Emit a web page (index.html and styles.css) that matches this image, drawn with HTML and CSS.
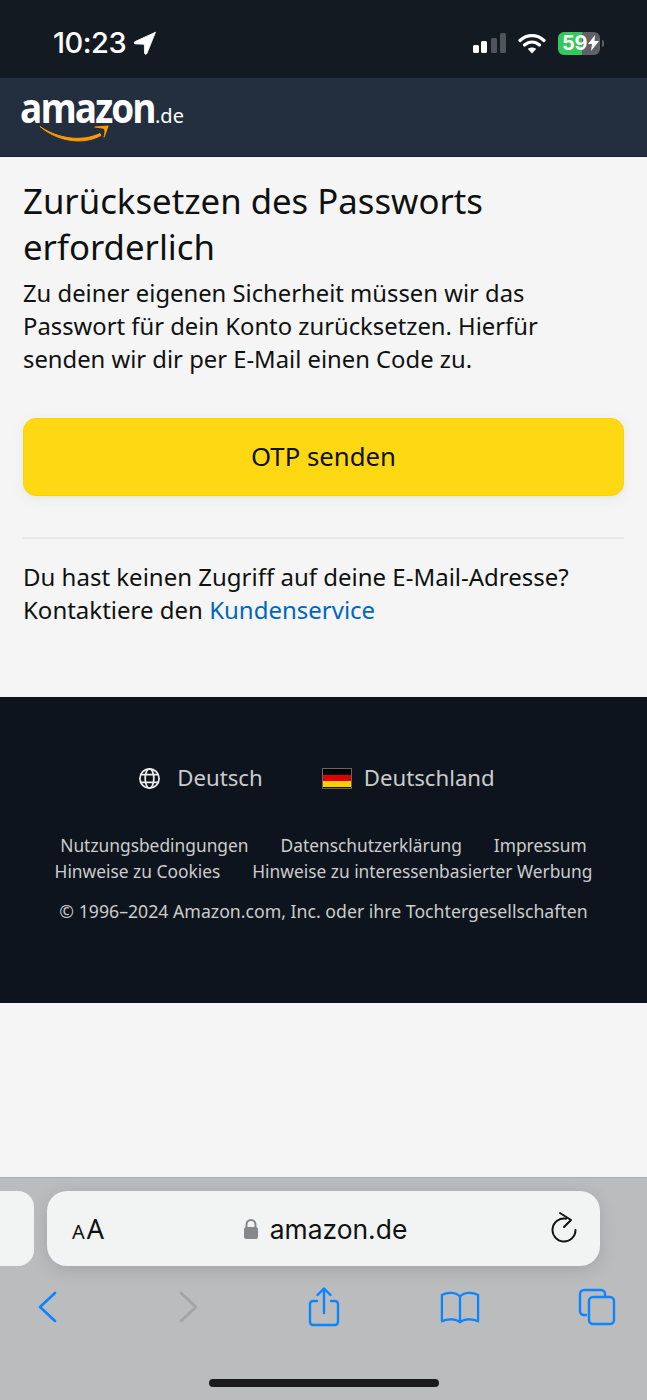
FILE: index.html
```html
<!DOCTYPE html>
<html lang="de">
<head>
<meta charset="utf-8">
<title>Amazon</title>
<link rel="stylesheet" href="styles.css">
</head>
<body>
<div class="page">
  <div class="status">
    <div class="status-left">
      <span class="time">10:23</span>
      <svg class="loc" width="24" height="24" viewBox="0 0 24 24"><path d="M22.500 1.200 2 10.600c-1.300.6-1 2.300.5 2.300l8.800.3.300 8.800c0 1.500 1.700 1.800 2.300.5z" fill="#fff" stroke="#fff" stroke-width=".8"/></svg>
    </div>
    <div class="status-right">
      <svg width="33" height="20" viewBox="0 0 33 20"><rect x="0" y="12" width="6" height="8" rx="1.500" fill="#fff"/><rect x="8" y="8" width="6" height="12" rx="1.500" fill="#fff"/><rect x="18" y="5" width="6" height="15" rx="1.500" fill="#50555c"/><rect x="27" y="0" width="6" height="20" rx="1.500" fill="#50555c"/></svg>
      <svg width="28" height="21" viewBox="0 0 28 21"><path d="M2 7.500C9 1 19 1 26 7.500M6.500 12C11 8 17 8 21.500 12" fill="none" stroke="#fff" stroke-width="3.200" stroke-linecap="round"/><path d="M14 20.500 9.800 16c2.400-2 6-2 8.400 0z" fill="#fff"/></svg>
      <div class="battery">
        <div class="batt-body"><span class="batt-num">59</span><svg class="bolt" width="11" height="16" viewBox="0 0 11 16"><path d="M7 0 0 9h4l-1 7 8-10H6.500z" fill="#fff"/></svg></div>
        <span class="batt-cap"></span>
      </div>
    </div>
  </div>
  <header class="nav">
    <div class="logo">
      <span class="logo-word">amazon</span><span class="logo-tld">.de</span>
      <svg class="smile" width="72" height="18" viewBox="0 0 72 18"><path d="M0 1.500C18 14 42 17 60 8.500l1 2C44 20 18 17 0 1.500z" fill="#f90" stroke="#f90" stroke-width="1" stroke-linejoin="round"/><path d="M55 2 68 1l-4 11c1.500-4 1.500-6 .5-8.500C62 2.800 59 2.600 55 2z" fill="#f90" stroke="#f90" stroke-width="1.200" stroke-linejoin="round"/></svg>
    </div>
  </header>
  <main class="main">
    <h1 class="title">Zurücksetzen des Passworts erforderlich</h1>
    <p class="lead">Zu deiner eigenen Sicherheit müssen wir das Passwort für dein Konto zurücksetzen. Hierfür senden wir dir per E-Mail einen Code zu.</p>
    <button class="otp" type="button">OTP senden</button>
    <hr class="rule">
    <p class="help">Du hast keinen Zugriff auf deine E-Mail-Adresse? Kontaktiere den <a class="link" href="#">Kundenservice</a></p>
  </main>
  <footer class="foot">
    <div class="locale">
      <span class="loc-item">
        <svg width="23" height="23" viewBox="0 0 24 24" fill="none" stroke="#eee" stroke-width="1.800"><circle cx="12" cy="12" r="10"/><ellipse cx="12" cy="12" rx="4.500" ry="10"/><path d="M3 8h18M3 16h18"/></svg>
        <span class="loc-label">Deutsch</span>
      </span>
      <span class="loc-item flag-item">
        <span class="flag"><i class="fb"></i><i class="fr"></i><i class="fy"></i></span>
        <span class="loc-label">Deutschland</span>
      </span>
    </div>
    <div class="links">
      <a class="flink" href="#">Nutzungsbedingungen</a><a class="flink" href="#">Datenschutzerklärung</a><a class="flink" href="#">Impressum</a>
    </div>
    <div class="links">
      <a class="flink" href="#">Hinweise zu Cookies</a><a class="flink" href="#">Hinweise zu interessenbasierter Werbung</a>
    </div>
    <p class="copy">© 1996–2024 Amazon.com, Inc. oder ihre Tochtergesellschaften</p>
  </footer>
  <div class="blank"></div>
  <div class="safari">
    <div class="tabs">
      <div class="tab-prev"></div>
      <div class="urlbar">
        <span class="aa"><span class="aa-s">A</span><span class="aa-l">A</span></span>
        <span class="url">
          <svg width="16" height="22" viewBox="0 0 16 22"><path d="M3.500 10V6.500a4.500 4.500 0 0 1 9 0V10" fill="none" stroke="#86878a" stroke-width="2"/><rect x="1" y="9" width="14" height="12" rx="2.500" fill="#86878a"/></svg>
          <span class="domain">amazon.de</span>
        </span>
        <svg class="reload" width="28" height="32" viewBox="0 0 28 32" fill="none" stroke="#111" stroke-width="2" stroke-linecap="round" stroke-linejoin="round"><path d="M15 7.700A11.500 11.500 0 1 0 24.500 19"/><path d="M9 2l11 7-7 7"/></svg>
      </div>
    </div>
    <div class="tools">
      <svg width="24" height="34" viewBox="0 0 24 34" fill="none" stroke="#0a84ff" stroke-width="2.600" stroke-linecap="round" stroke-linejoin="round"><path d="M20 3 5 17l15 14"/></svg>
      <svg width="24" height="34" viewBox="0 0 24 34" fill="none" stroke="#a2a3a6" stroke-width="2.600" stroke-linecap="round" stroke-linejoin="round"><path d="M5 3l15 14-15 14"/></svg>
      <svg width="32" height="40" viewBox="0 0 32 40" fill="none" stroke="#0a84ff" stroke-width="2.400" stroke-linecap="round" stroke-linejoin="round"><path d="M9 14H5a3 3 0 0 0-3 3v18a3 3 0 0 0 3 3h22a3 3 0 0 0 3-3V17a3 3 0 0 0-3-3h-4"/><path d="M16 26V2M9.500 8 16 1.500 22.500 8"/></svg>
      <svg width="40" height="34" viewBox="0 0 42 34" fill="none" stroke="#0a84ff" stroke-width="2.400" stroke-linecap="round" stroke-linejoin="round"><path d="M21 6C17 1.500 8 1 2 4.500V32c6-3 15-2.500 19 1 4-3.500 13-4 19-1V4.500C34 1 25 1.500 21 6zV33"/></svg>
      <svg width="38" height="38" viewBox="0 0 38 38" fill="none" stroke="#0a84ff" stroke-width="2.400"><path d="M9 27H6a4 4 0 0 1-4-4V6a4 4 0 0 1 4-4h17a4 4 0 0 1 4 4v3"/><rect x="11" y="9" width="25" height="27" rx="4"/></svg>
    </div>
    <div class="home"></div>
  </div>
</div>
</body>
</html>
```

FILE: styles.css
```css
* { box-sizing: border-box; }
html, body { margin: 0; padding: 0; height: 1400px; overflow: hidden; }
body { font-family: "Noto Sans", "Liberation Sans", sans-serif; background: #f5f5f5; color: #0f1111; }
.page { width: 647px; height: 1400px; display: flex; flex-direction: column; }

.status { height: 78px; background: #131a22; display: flex; justify-content: space-between; padding: 25px 43px 0 53px; flex: none; }
.status-left { display: flex; gap: 7px; height: 36px; align-items: center; }
.time { font-family: Inter, "Liberation Sans", sans-serif; font-size: 29px; font-weight: 500; color: #fff; line-height: 36px; letter-spacing: -0.500px; }
.status-right { display: flex; gap: 12px; align-items: center; height: 36px; }
.battery { display: flex; align-items: center; gap: 2px; }
.batt-body { width: 42px; height: 23px; border-radius: 6px; background: linear-gradient(90deg, #34c759 0 58%, #5e6064 58% 100%); display: flex; align-items: center; padding-left: 4px; }
.batt-num { font-family: Inter, "Liberation Sans", sans-serif; font-size: 20px; font-weight: 700; color: #fff; line-height: 23px; letter-spacing: -0.400px; }
.bolt { margin-left: 1px; }
.batt-cap { width: 2px; height: 7px; background: #5e6064; border-radius: 0 2px 2px 0; }

.nav { height: 79px; background: #232f3e; flex: none; padding: 11px 0 0 20px; border-bottom: 1px solid #1a2430; }
.logo { position: relative; width: 170px; height: 50px; display: flex; align-items: baseline; line-height: 36px; }
.logo-word { display: inline-block; font-family: "Open Sans", "Liberation Sans", sans-serif; font-size: 42px; font-weight: 700; color: #fff; letter-spacing: -2.200px; transform: scaleX(.88); transform-origin: left center; width: 135px; }
.logo-tld { font-family: "Noto Sans", sans-serif; font-size: 20px; color: #fff; }
.smile { position: absolute; left: 20px; top: 36px; }

.main { flex: none; height: 540px; padding: 21px 23px 0 23px; }
.title { margin: 0; font-size: 34.750px; font-weight: 400; line-height: 46px; color: #0f1111; }
.lead { margin: 7px 0 0; font-size: 23.800px; line-height: 33px; padding-right: 3px; }
.otp { display: block; width: 100%; height: 78px; margin-top: 42px; padding: 0 0 2px; border: 1px solid #fcd200; border-radius: 13px; background: #ffd814; box-shadow: 0 3px 8px rgba(213,217,217,.5); font-family: inherit; font-size: 25.750px; color: #0f1111; }
.rule { margin: 41px 0 0; border: 0; border-top: 2px solid #e7e7e7; }
.help { margin: 21px 0 0; font-size: 24px; line-height: 33px; }
.link { color: #0066c0; text-decoration: none; }

.foot { flex: none; height: 306px; background: #0d141e; padding-top: 63px; text-align: center; }
.locale { display: flex; justify-content: center; align-items: center; height: 36px; gap: 59px; padding-right: 14px; }
.loc-item { display: inline-flex; align-items: center; gap: 16px; }
.flag-item { gap: 12px; }
.loc-label { font-size: 22.200px; color: #ccc; line-height: 36px; }
.flag { width: 30px; height: 21px; display: flex; flex-direction: column; border: 1px solid #666; }
.flag i { display: block; flex: 1; }
.fb { background: #000; }
.fr { background: #d00; }
.fy { background: #ffce00; }
.links { display: flex; justify-content: center; gap: 32px; line-height: 26px; height: 26px; }
.locale + .links { margin-top: 36px; }
.flink { color: #ccc; font-size: 17.350px; text-decoration: none; white-space: nowrap; }
.copy { margin: 14px 0 0; font-size: 17.700px; line-height: 26px; color: #ccc; }

.blank { flex: 1; background: #f5f5f5; }

.safari { flex: none; height: 223px; background: #bbbcbe; border-top: 1px solid #aaabad; position: relative; }
.tabs { display: flex; gap: 13px; padding-top: 13px; height: 88px; }
.tab-prev { width: 34px; height: 75px; background: #f2f3f3; border-radius: 0 16px 16px 0; }
.urlbar { width: 553px; height: 75px; background: #f2f3f3; border-radius: 20px; box-shadow: 0 4px 18px rgba(0,0,0,.12); display: flex; align-items: center; justify-content: space-between; padding: 0 21px 0 25px; }
.aa { display: flex; align-items: baseline; color: #111; line-height: 1; }
.aa-s { font-size: 20px; }
.aa-l { font-size: 27px; margin-left: 2px; }
.url { display: flex; align-items: center; gap: 11px; margin-right: 5px; }
.domain { font-family: Inter, "Liberation Sans", sans-serif; font-size: 26.400px; color: #111; line-height: 36px; }
.reload { margin-top: -4px; }
.tools { display: grid; grid-template-columns: 94px 188px 84px 188px 86px; justify-items: center; align-items: center; height: 60px; margin-top: 11px; }
.home { position: absolute; left: 209px; bottom: 13px; width: 230px; height: 8px; border-radius: 4px; background: #1b1b1d; }
```
